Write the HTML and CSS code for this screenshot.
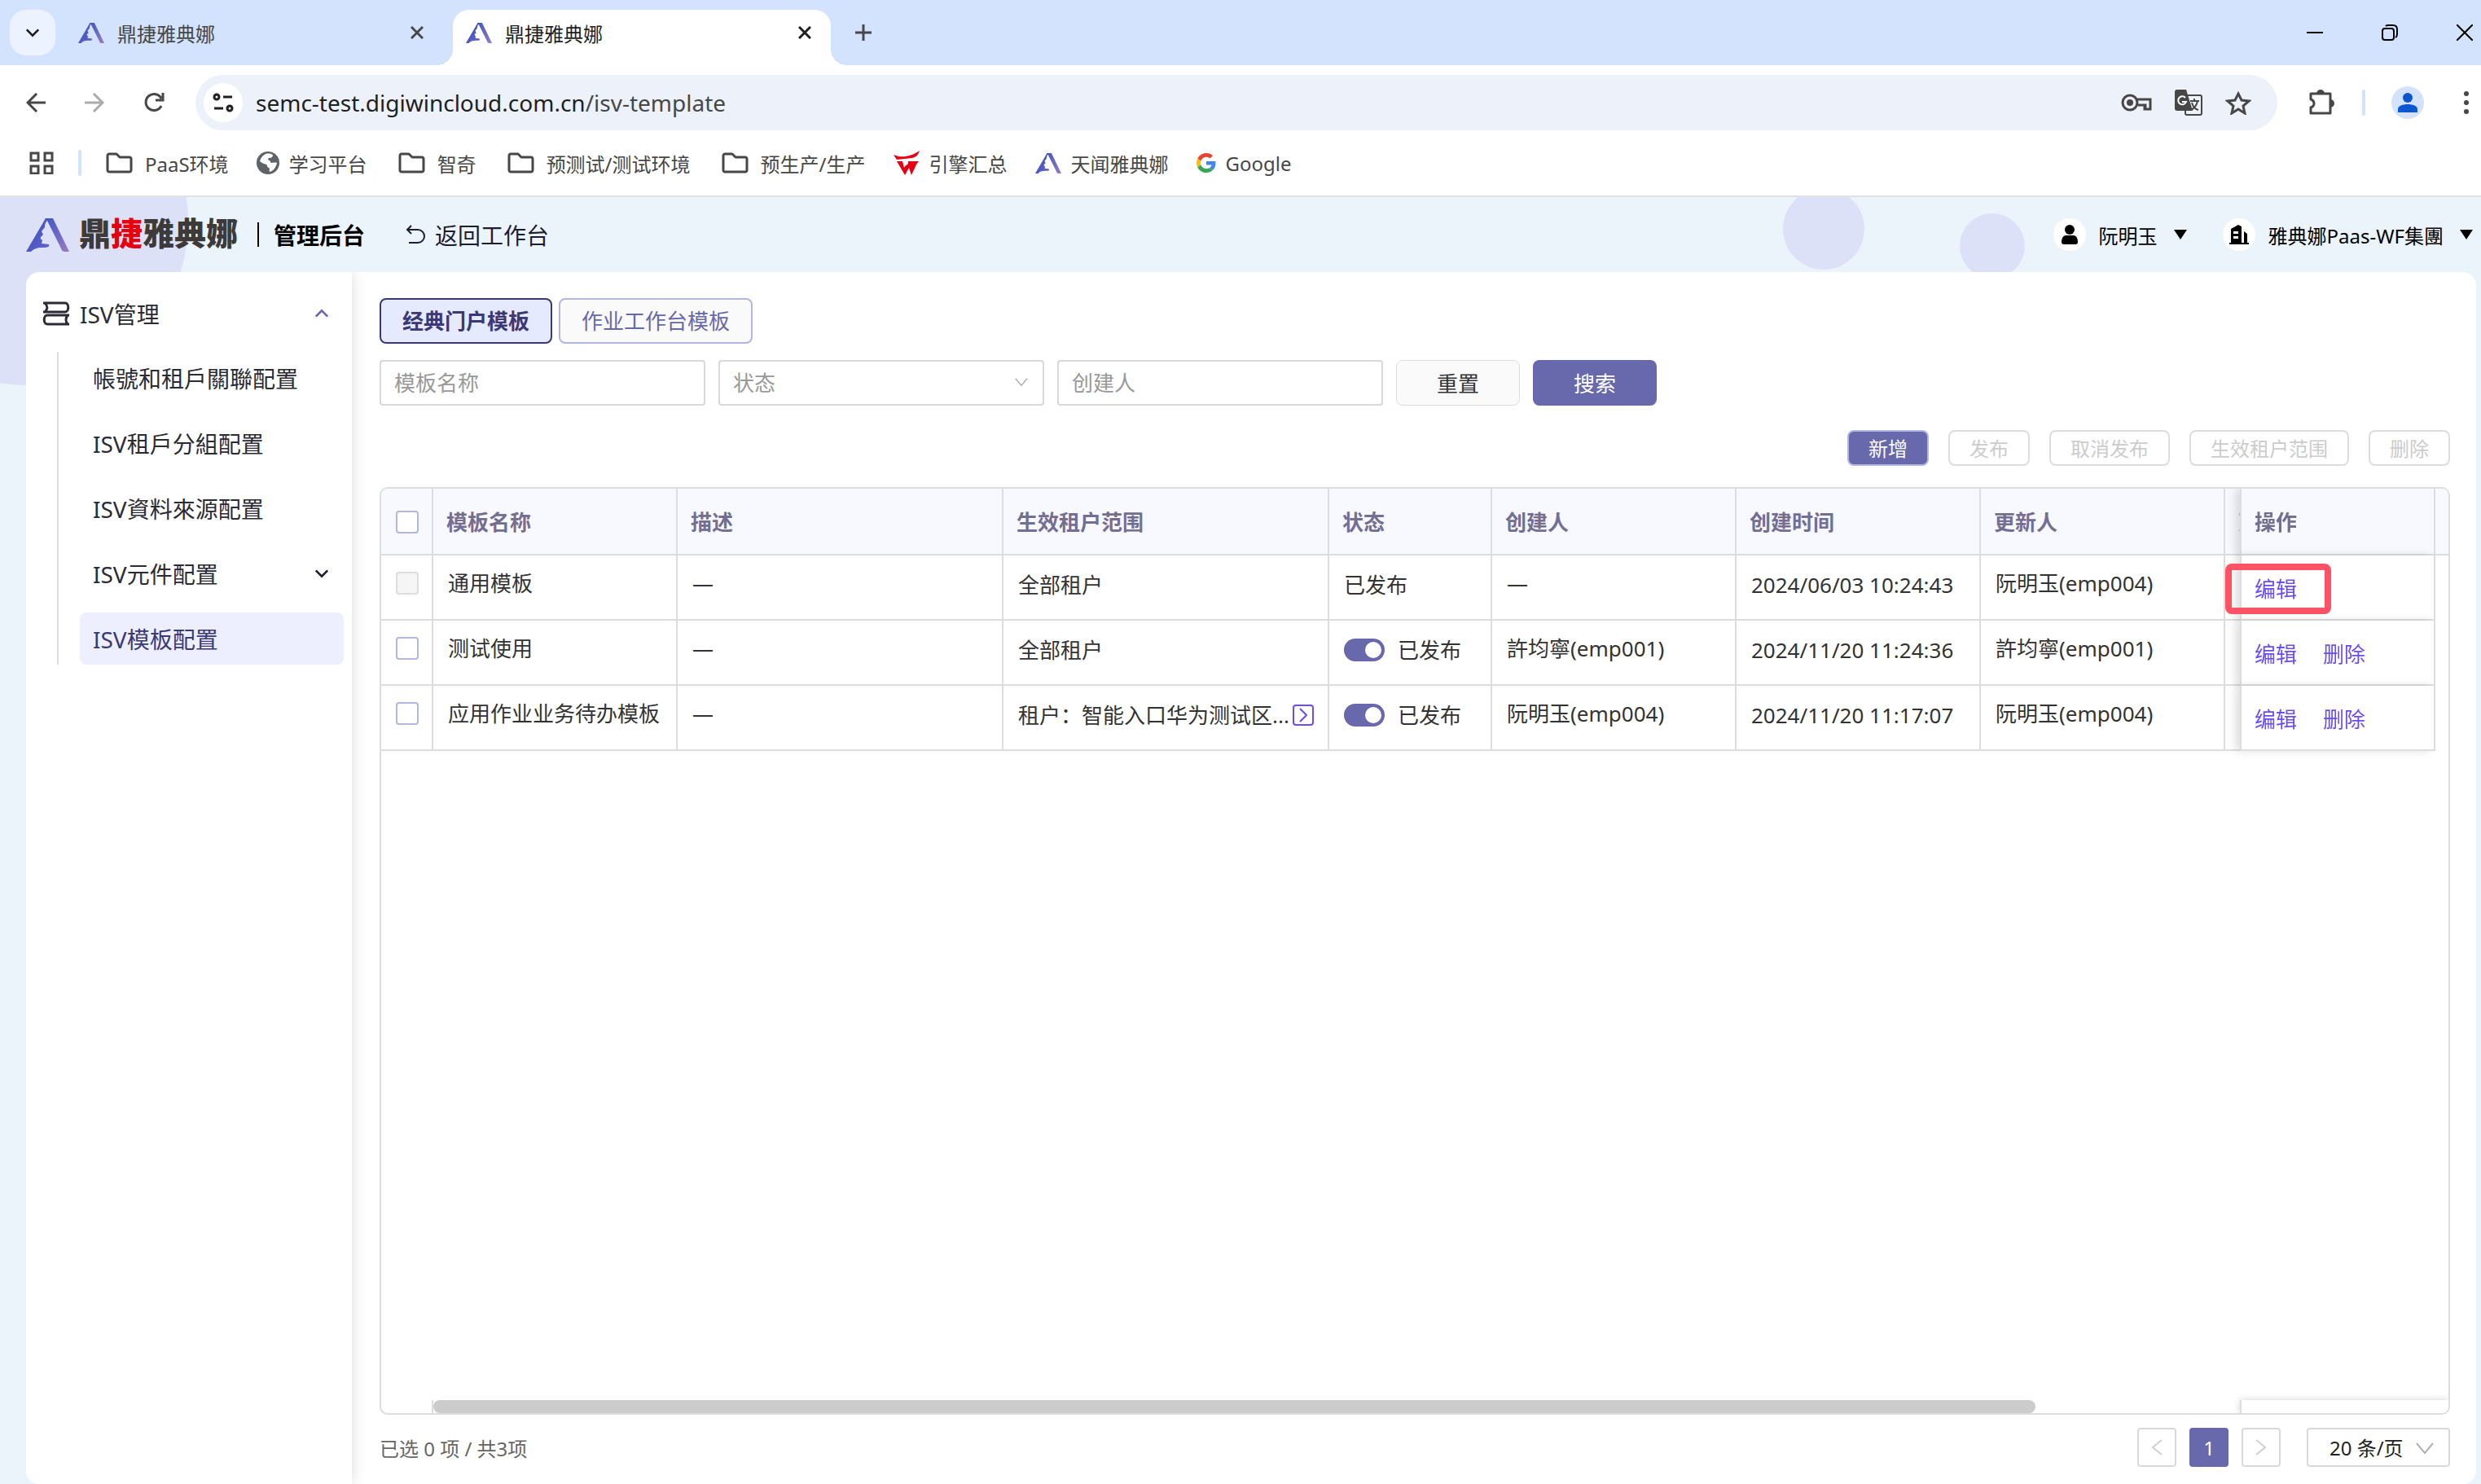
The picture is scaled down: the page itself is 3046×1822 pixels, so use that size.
FILE: index.html
```html
<!DOCTYPE html>
<html lang="zh-CN">
<head>
    <meta charset="UTF-8">
    <meta name="viewport" content="width=device-width, initial-scale=1.0">
    <title>鼎捷雅典娜</title>
    <link rel="stylesheet" href="styles.css">
</head>
<body>
    <!-- 共用图标 -->
    <svg class="defs" width="0" height="0" aria-hidden="true">
        <defs>
            <linearGradient id="logoLeft" x1="0" y1="0" x2="1" y2="1">
                <stop offset="0" stop-color="#2f4fc4"/>
                <stop offset="1" stop-color="#6a63c4"/>
            </linearGradient>
            <linearGradient id="logoRight" x1="0" y1="0" x2="1" y2="1">
                <stop offset="0" stop-color="#3f57c6"/>
                <stop offset="1" stop-color="#9a7cc0"/>
            </linearGradient>
            <symbol id="logo" viewBox="0 0 53 41">
                <path fill="url(#logoLeft)" d="M0 41 24 0h5c-5 4-6 7-6 11l-4 5 2 4-3 3c-1 2 1 3 2 4l-1 4 9 1c1 3-1 4-8 4-7 0-11 2-14 5z"/>
                <path fill="url(#logoRight)" d="M23 0h10l20 41h-5c-3 0-4-1-5-4L26 3z"/>
            </symbol>
            <symbol id="folder" viewBox="0 0 40 32">
                <path fill="none" stroke="#474747" stroke-width="3" stroke-linejoin="round" d="M6 7c0-1 1-2 2-2h9l4 4h12c1 0 2 1 2 2v14c0 1-1 2-2 2H8c-1 0-2-1-2-2z"/>
            </symbol>
            <symbol id="cross" viewBox="0 0 16 16">
                <path fill="none" stroke="currentColor" stroke-width="3" d="M1 1l14 14M15 1L1 15"/>
            </symbol>
            <symbol id="chevron" viewBox="0 0 20 12">
                <path fill="none" stroke="currentColor" stroke-width="3" d="M2 2l8 8 8-8"/>
            </symbol>
            <symbol id="chevron-thin" viewBox="0 0 22 14">
                <path fill="none" stroke="currentColor" stroke-width="2" d="M1 1l10 12L21 1"/>
            </symbol>
        </defs>
    </svg>

    <div class="browser">
        <div class="tab-strip">
            <button class="tab-search" aria-label="搜索标签页"><svg width="18" height="12"><use href="#chevron"/></svg></button>
            <div class="tab">
                <svg width="32" height="25"><use href="#logo"/></svg>
                <span class="tab-title">鼎捷雅典娜</span>
                <button class="tab-close" aria-label="关闭"><svg width="16" height="16"><use href="#cross"/></svg></button>
            </div>
            <div class="tab active">
                <svg width="32" height="25"><use href="#logo"/></svg>
                <span class="tab-title">鼎捷雅典娜</span>
                <button class="tab-close" aria-label="关闭"><svg width="16" height="16"><use href="#cross"/></svg></button>
            </div>
            <button class="tab-new" aria-label="新标签页"><svg width="20" height="20"><path d="M10 0v20M0 10h20" stroke="#474747" stroke-width="3"/></svg></button>
            <div class="window-buttons">
                <button aria-label="最小化"><svg width="20" height="20"><path d="M0 10h20" stroke="#000" stroke-width="2"/></svg></button>
                <button aria-label="还原"><svg width="20" height="20" fill="none" stroke="#000" stroke-width="2"><rect x="1" y="5" width="14" height="14" rx="3"/><path d="M5 2c1-1 2-1 3-1h6c3 0 5 2 5 5v6c0 2 0 3-2 4"/></svg></button>
                <button aria-label="关闭"><svg width="20" height="20"><path d="M0 0l20 20M20 0L0 20" stroke="#000" stroke-width="2"/></svg></button>
            </div>
        </div>

        <div class="toolbar">
            <div class="nav-buttons">
                <button aria-label="后退"><svg width="24" height="24" fill="none" stroke="#474747" stroke-width="3"><path d="M24 12H2M13 1L2 12l11 11"/></svg></button>
                <button aria-label="前进"><svg width="24" height="24" fill="none" stroke="#ababab" stroke-width="3"><path d="M0 12h22M11 1l11 11-11 11"/></svg></button>
                <button aria-label="刷新"><svg width="26" height="26" fill="none" stroke="#474747" stroke-width="3"><path d="M22 17A10 10 0 1 1 22 8M24 1v9h-9"/></svg></button>
            </div>
            <div class="omnibox">
                <button class="site-info" aria-label="网站信息"><svg width="26" height="24" fill="none" stroke="#1f1f1f" stroke-width="3"><circle cx="5" cy="5" r="3"/><path d="M13 5h11M2 19h11"/><circle cx="21" cy="19" r="3"/></svg></button>
                <div class="url">semc-test.digiwincloud.com.cn<span>/isv-template</span></div>
                <button aria-label="密码"><svg width="38" height="24" fill="none" stroke="#474747" stroke-width="3"><circle cx="11" cy="12" r="9"/><circle cx="11" cy="12" r="4" fill="#474747" stroke="none"/><path d="M19 8h17v12h-7v-5M30 20v-5h-9"/></svg></button>
                <button aria-label="翻译"><svg width="34" height="34"><rect x="13" y="8" width="20" height="24" rx="2" fill="none" stroke="#474747" stroke-width="2"/><path d="M3 1h11l8 26H3c-2 0-3-1-3-3V4c0-2 1-3 3-3z" fill="#474747"/><path d="M13 11a5 5 0 1 0 1 5H9" fill="none" stroke="#fff" stroke-width="2"/><path d="M19 15h11M24 12v3M28 15c-1 5-4 9-8 11M21 17c1 4 4 8 8 9" fill="none" stroke="#474747" stroke-width="2"/></svg></button>
                <button aria-label="收藏"><svg width="32" height="30" fill="none" stroke="#474747" stroke-width="3"><path d="M16 4l4 8 9 1-7 6 2 9-8-5-8 5 2-9-7-6 9-1z"/></svg></button>
            </div>
            <button class="extensions" aria-label="扩展程序"><svg width="34" height="34"><path d="M3 6h24v24H3v-7c3-1 4-2 4-5s-1-4-4-5z" fill="none" stroke="#474747" stroke-width="3" stroke-linejoin="round"/><path d="M10 6a5 5 0 0 1 10 0zM27 13a5 5 0 0 1 0 10z" fill="#474747"/></svg></button>
            <span class="bar-divider"></span>
            <button class="profile" aria-label="个人资料"><svg width="24" height="24" fill="#0b57d0"><circle cx="12" cy="6" r="6"/><path d="M0 24v-4c0-4 6-6 12-6s12 2 12 6v4z"/></svg></button>
            <button class="more" aria-label="更多"><svg width="6" height="28" fill="#474747"><circle cx="3" cy="3" r="3"/><circle cx="3" cy="14" r="3"/><circle cx="3" cy="25" r="3"/></svg></button>
        </div>

        <div class="bookmarks">
            <button aria-label="应用"><svg width="30" height="28" fill="none" stroke="#474747" stroke-width="3"><path d="M2 2h9v9H2zM19 2h9v9h-9zM2 18h9v9H2zM19 18h9v9h-9z"/></svg></button>
            <span class="bar-divider"></span>
            <a href="#"><svg width="40" height="32"><use href="#folder"/></svg>PaaS环境</a>
            <a href="#"><svg width="28" height="28"><circle cx="14" cy="14" r="14" fill="#5f6368"/><path d="M11 3c4-1 7 0 9 1 0 3-2 4-5 4-1 0-1 2 0 3 3 0 1 2 3 3 2 0 5-1 7 0-1 6-5 10-9 11-1-3 1-4-1-5-3-1-1-3-3-4-3-1-6-2-8-4 1-4 3-7 7-9z" fill="#fff"/></svg>学习平台</a>
            <a href="#"><svg width="40" height="32"><use href="#folder"/></svg>智奇</a>
            <a href="#"><svg width="40" height="32"><use href="#folder"/></svg>预测试/测试环境</a>
            <a href="#"><svg width="40" height="32"><use href="#folder"/></svg>预生产/生产</a>
            <a href="#"><svg width="32" height="30" fill="#e60012"><path d="M0 5c10 4 20 3 32-5-2 6-5 8-9 9L4 11zM4 13h7l2 8 4-8h14l-3 4-6 13-3-9-5 9z"/><path d="M12 13h6v3l-5 4z" fill="#fff"/></svg>引擎汇总</a>
            <a href="#"><svg width="32" height="25"><use href="#logo"/></svg>天闻雅典娜</a>
            <a href="#"><svg width="24" height="24" viewBox="0 0 48 48"><path fill="#ea4335" d="M24 9.500c3.540 0 6.710 1.220 9.210 3.600l6.850-6.850C35.900 2.380 30.470 0 24 0 14.620 0 6.510 5.380 2.560 13.220l7.980 6.190C12.430 13.720 17.740 9.500 24 9.500z"/><path fill="#4285f4" d="M46.980 24.550c0-1.570-.15-3.090-.38-4.550H24v9.020h12.940c-.58 2.960-2.260 5.480-4.780 7.180l7.730 6c4.510-4.180 7.090-10.360 7.090-17.650z"/><path fill="#fbbc05" d="M10.530 28.590A14.500 14.500 0 0 1 9.770 24c0-1.600.27-3.140.76-4.590l-7.980-6.190A24 24 0 0 0 0 24c0 3.880.92 7.540 2.560 10.780z"/><path fill="#34a853" d="M24 48c6.480 0 11.930-2.130 15.890-5.810l-7.730-6c-2.150 1.450-4.920 2.300-8.160 2.300-6.260 0-11.570-4.220-13.470-9.910l-7.980 6.190C6.510 42.620 14.620 48 24 48z"/></svg>Google</a>
        </div>
    </div>

    <div class="app">
        <span class="bubble bubble-large"></span>
        <span class="bubble bubble-medium"></span>
        <span class="bubble bubble-small"></span>

        <header class="app-header">
            <svg width="53" height="41"><use href="#logo"/></svg>
            <div class="brand">鼎<em>捷</em>雅典娜</div>
            <span class="brand-divider"></span>
            <h1>管理后台</h1>
            <a class="back-link" href="#"><svg width="24" height="24" fill="none" stroke="#1d1c33" stroke-width="2"><path d="M7 1L2 6l5 5M2 6h13a8 8 0 0 1 0 16H4"/></svg>返回工作台</a>
            <div class="account">
                <button><span class="round-icon"><svg width="20" height="24"><circle cx="10" cy="6" r="6"/><path d="M5 13h10c3 0 5 4 5 8 0 2-1 3-3 3H3c-2 0-3-1-3-3 0-4 2-8 5-8z"/></svg></span>阮明玉<svg class="caret" width="16" height="12"><path d="M0 0h16L8 12z"/></svg></button>
                <button><span class="round-icon"><svg width="24" height="24"><path fill-rule="evenodd" d="M0 22h2V5l9-5 4 2v20h3V8l4 3v11h2v2H0zM5 8h6v3H5zM5 14h6v3H5z"/></svg></span>雅典娜Paas-WF集團<svg class="caret" width="16" height="12"><path d="M0 0h16L8 12z"/></svg></button>
            </div>
        </header>

        <div class="panel">
            <nav class="sidebar">
                <button class="menu-title">
                    <svg width="34" height="30" fill="none" stroke="#2b2b36" stroke-width="3"><path d="M1 2h27c5 0 5 11 0 11H1M3 2c4 4 4 7 0 11M33 17H6c-5 0-5 11 0 11h27M31 17c-3 4-3 7 0 11"/></svg>
                    <span>ISV管理</span>
                    <svg class="menu-arrow up" width="18" height="12"><use href="#chevron"/></svg>
                </button>
                <ul class="submenu">
                    <li><a href="#">帳號和租戶關聯配置</a></li>
                    <li><a href="#">ISV租戶分組配置</a></li>
                    <li><a href="#">ISV資料來源配置</a></li>
                    <li><a href="#">ISV元件配置<svg class="menu-arrow" width="18" height="12"><use href="#chevron"/></svg></a></li>
                    <li><a class="active" href="#">ISV模板配置</a></li>
                </ul>
            </nav>

            <main class="content">
                <div class="type-tabs">
                    <button class="type-tab active">经典门户模板</button>
                    <button class="type-tab">作业工作台模板</button>
                </div>

                <form class="filters">
                    <input type="text" placeholder="模板名称" aria-label="模板名称">
                    <div class="select-box">
                        <select aria-label="状态"><option>状态</option></select>
                        <svg width="16" height="10"><use href="#chevron-thin"/></svg>
                    </div>
                    <input type="text" placeholder="创建人" aria-label="创建人">
                    <button type="button" class="btn-reset">重置</button>
                    <button type="button" class="btn-search">搜索</button>
                </form>

                <div class="actions">
                    <button class="btn-add">新增</button>
                    <button disabled>发布</button>
                    <button disabled>取消发布</button>
                    <button disabled>生效租户范围</button>
                    <button disabled>删除</button>
                </div>

                <div class="grid">
                    <div class="grid-view">
                        <table>
                            <colgroup>
                                <col class="w-check"><col class="w-300"><col class="w-400"><col class="w-400"><col class="w-200">
                                <col class="w-300"><col class="w-300"><col class="w-300"><col class="w-300"><col class="w-240"><col class="w-gutter">
                            </colgroup>
                            <thead>
                                <tr>
                                    <th class="check"><input type="checkbox" aria-label="全选"></th>
                                    <th>模板名称</th>
                                    <th>描述</th>
                                    <th>生效租户范围</th>
                                    <th>状态</th>
                                    <th>创建人</th>
                                    <th>创建时间</th>
                                    <th>更新人</th>
                                    <th>更新时间</th>
                                    <th class="operate">操作</th>
                                    <th class="gutter"></th>
                                </tr>
                            </thead>
                            <tbody>
                                <tr>
                                    <td class="check"><input type="checkbox" aria-label="通用模板" disabled></td>
                                    <td>通用模板</td>
                                    <td>—</td>
                                    <td class="custom">全部租户</td>
                                    <td class="custom">已发布</td>
                                    <td>—</td>
                                    <td class="custom">2024/06/03 10:24:43</td>
                                    <td>阮明玉(emp004)</td>
                                    <td></td>
                                    <td class="operate"><a href="#">编辑</a><span class="mark"></span></td>
                                    <td class="gutter"></td>
                                </tr>
                                <tr>
                                    <td class="check"><input type="checkbox" aria-label="测试使用"></td>
                                    <td>测试使用</td>
                                    <td>—</td>
                                    <td class="custom">全部租户</td>
                                    <td class="custom"><label class="status"><input type="checkbox" class="switch" checked>已发布</label></td>
                                    <td>許均寧(emp001)</td>
                                    <td class="custom">2024/11/20 11:24:36</td>
                                    <td>許均寧(emp001)</td>
                                    <td></td>
                                    <td class="operate"><a href="#">编辑</a><a href="#">删除</a></td>
                                    <td class="gutter"></td>
                                </tr>
                                <tr>
                                    <td class="check"><input type="checkbox" aria-label="应用作业业务待办模板"></td>
                                    <td>应用作业业务待办模板</td>
                                    <td>—</td>
                                    <td class="custom"><div class="scope"><span>租户：智能入口华为测试区...</span><button aria-label="展开"><svg width="10" height="18"><path d="M1 1l8 8-8 8" fill="none" stroke="currentColor" stroke-width="2"/></svg></button></div></td>
                                    <td class="custom"><label class="status"><input type="checkbox" class="switch" checked>已发布</label></td>
                                    <td>阮明玉(emp004)</td>
                                    <td class="custom">2024/11/20 11:17:07</td>
                                    <td>阮明玉(emp004)</td>
                                    <td></td>
                                    <td class="operate"><a href="#">编辑</a><a href="#">删除</a></td>
                                    <td class="gutter"></td>
                                </tr>
                            </tbody>
                        </table>
                    </div>
                    <div class="scroll-row">
                        <div class="scroll-left"></div>
                        <div class="scroll-track"><div class="scroll-thumb"></div></div>
                        <div class="scroll-right"></div>
                    </div>
                </div>

                <footer class="pager">
                    <p>已选 0 项 / 共3项</p>
                    <button aria-label="上一页" disabled><svg width="14" height="20"><path d="M13 1L2 10l11 9" fill="none" stroke="#d0d0d0" stroke-width="2"/></svg></button>
                    <button class="current">1</button>
                    <button aria-label="下一页" disabled><svg width="14" height="20"><path d="M1 1l11 9-11 9" fill="none" stroke="#d0d0d0" stroke-width="2"/></svg></button>
                    <div class="select-box page-size">
                        <select aria-label="每页条数"><option>20 条/页</option></select>
                        <svg width="22" height="14"><use href="#chevron-thin"/></svg>
                    </div>
                </footer>
            </main>
        </div>
    </div>
</body>
</html>
```
FILE: styles.css
```css
* {
    margin: 0;
    padding: 0;
    box-sizing: border-box;
}

body {
    font-family: "Noto Sans", "Noto Sans CJK SC", sans-serif;
    font-size: 26px;
    color: #333;
    display: flex;
    flex-direction: column;
    height: 100vh;
    overflow: hidden;
}

button {
    font: inherit;
    color: inherit;
    background: none;
    border: none;
    display: flex;
    align-items: center;
    justify-content: center;
    white-space: nowrap;
    cursor: pointer;
}

a {
    color: inherit;
    text-decoration: none;
}

svg {
    flex: none;
    display: block;
}

.defs {
    position: absolute;
}

/* 浏览器外框 */
.browser {
    flex: none;
    background: #fff;
    border-bottom: 2px solid #dfe1e5;
    font-size: 24px;
    color: #474747;
}

.tab-strip {
    display: flex;
    align-items: center;
    gap: 12px;
    height: 80px;
    padding: 0 10px 0 12px;
    background: #d3e3fd;
}

.tab-search {
    width: 56px;
    height: 56px;
    border-radius: 20px;
    background: #ecf3fe;
    color: #1f1f1f;
}

.tab {
    position: relative;
    display: flex;
    align-items: center;
    gap: 16px;
    width: 464px;
    height: 68px;
    padding: 0 24px 0 16px;
}

.tab-title {
    flex: 1;
}

.tab.active {
    align-self: flex-end;
    padding-bottom: 12px;
    background: #fff;
    border-radius: 20px 20px 0 0;
    color: #1f1f1f;
}

.tab.active::before,
.tab.active::after {
    content: "";
    position: absolute;
    bottom: 0;
    width: 20px;
    height: 20px;
}

.tab.active::before {
    left: -20px;
    background: radial-gradient(circle at 0 0, transparent 20px, #fff 20px);
}

.tab.active::after {
    right: -20px;
    background: radial-gradient(circle at 100% 0, transparent 20px, #fff 20px);
}

.tab-new {
    margin-left: 18px;
}

.window-buttons {
    display: flex;
    gap: 72px;
    margin-left: auto;
}

.toolbar {
    display: flex;
    align-items: center;
    height: 92px;
    padding: 0 15px 0 32px;
}

.nav-buttons {
    display: flex;
    gap: 48px;
    width: 208px;
}

.omnibox {
    flex: 1;
    display: flex;
    align-items: center;
    gap: 28px;
    height: 68px;
    padding: 0 32px 0 10px;
    border-radius: 34px;
    background: #edf1fa;
    margin-right: 38px;
}

.site-info {
    width: 48px;
    height: 48px;
    border-radius: 24px;
    background: #fff;
}

.url {
    flex: 1;
    margin-left: -12px;
    font-size: 28px;
    color: #1f1f1f;
}

.url span {
    color: #474747;
}

.bar-divider {
    width: 4px;
    height: 32px;
    border-radius: 2px;
    background: #d3e3fd;
}

.toolbar .bar-divider {
    margin: 0 32px;
}

.profile {
    width: 40px;
    height: 40px;
    border-radius: 20px;
    background: #d3e3fd;
    margin-right: 49px;
}

.bookmarks {
    display: flex;
    align-items: center;
    gap: 34px;
    height: 56px;
    padding-left: 36px;
    margin-bottom: 12px;
}

.bookmarks a {
    display: flex;
    align-items: center;
    gap: 12px;
    white-space: nowrap;
}

.bookmarks .bar-divider {
    margin: 0 -8px 0 -4px;
}

/* 页面头部 */
.app {
    position: relative;
    flex: 1;
    min-height: 0;
    display: flex;
    flex-direction: column;
    overflow: hidden;
    background: #ebf3fb;
}

.bubble {
    position: absolute;
    border-radius: 50%;
    background: #dde1f8;
}

.bubble-large {
    left: -169px;
    top: -169px;
    width: 400px;
    height: 400px;
}

.bubble-medium {
    right: 757px;
    top: -11px;
    width: 100px;
    height: 100px;
}

.bubble-small {
    right: 560px;
    top: 20px;
    width: 80px;
    height: 80px;
}

.app-header {
    position: relative;
    flex: none;
    display: flex;
    align-items: center;
    height: 92px;
    padding: 0 10px 0 32px;
    color: #000;
}

.brand {
    margin-left: 12px;
    font-size: 39px;
    font-weight: 900;
    line-height: 48px;
    padding-bottom: 4px;
    color: #3e3a39;
}

.brand em {
    font-style: normal;
    color: #e60012;
}

.brand-divider {
    width: 2px;
    height: 30px;
    margin: 0 18px 0 24px;
    background: #000;
}

.app-header h1 {
    font-size: 28px;
    font-weight: 700;
}

.back-link {
    display: flex;
    align-items: center;
    gap: 12px;
    margin-left: 50px;
    font-size: 28px;
    color: #1d1c33;
}

.account {
    display: flex;
    gap: 44px;
    margin-left: auto;
    font-size: 24px;
}

.round-icon {
    display: flex;
    align-items: center;
    justify-content: center;
    width: 40px;
    height: 40px;
    margin-right: 16px;
    border-radius: 20px;
    background: #fff;
}

.caret {
    margin-left: 20px;
}

.panel {
    position: relative;
    flex: 1;
    min-height: 0;
    display: flex;
    margin: 0 6px 0 32px;
    border-radius: 16px;
    background: #fff;
    overflow: hidden;
}

/* 侧边菜单 */
.sidebar {
    flex: none;
    width: 400px;
    padding: 16px 10px 0 20px;
    box-shadow: 0 0 16px rgba(0, 0, 0, 0.15);
    font-size: 28px;
    color: #2b2b36;
}

.menu-title {
    width: 100%;
    height: 70px;
    gap: 12px;
    padding-right: 18px;
}

.menu-arrow {
    margin-left: auto;
    color: #1d1c33;
}

.menu-arrow.up {
    transform: rotate(180deg);
    color: #6868ad;
}

.submenu {
    list-style: none;
    display: flex;
    flex-direction: column;
    gap: 16px;
    margin: 12px 0 0 18px;
    padding-left: 26px;
    border-left: 2px solid #d8dcec;
}

.submenu a {
    display: flex;
    align-items: center;
    height: 64px;
    padding: 0 18px 0 16px;
    border-radius: 8px;
}

.submenu a.active {
    background: #eeeffe;
    color: #3a3877;
}

/* 内容区 */
.content {
    flex: 1;
    min-width: 0;
    display: flex;
    flex-direction: column;
    padding: 32px 32px 21px 34px;
}

.type-tabs {
    display: flex;
    gap: 8px;
}

.type-tab {
    height: 56px;
    padding: 0 26px 2px;
    border: 2px solid #b1b7e0;
    border-radius: 8px;
    background: #fafafa;
    color: #6868ad;
}

.type-tab.active {
    border-color: #3a3877;
    background: #e6eafe;
    color: #3a3877;
    font-weight: 700;
}

.filters {
    display: flex;
    gap: 16px;
    margin-top: 20px;
}

.filters input,
.select-box select {
    width: 400px;
    height: 56px;
    padding: 0 16px;
    border: 2px solid #d9d9d9;
    border-radius: 4px;
    background: #fff;
    font: inherit;
    color: #999;
    outline: none;
}

.filters input::placeholder {
    color: #999;
}

.select-box {
    position: relative;
}

.select-box select {
    appearance: none;
}

.select-box svg {
    position: absolute;
    right: 20px;
    top: 50%;
    margin-top: -6px;
    color: #b0b0b0;
    pointer-events: none;
}

.filters button {
    width: 152px;
    height: 56px;
    border-radius: 8px;
}

.btn-reset {
    border: 1px solid #ddd;
    background: #fafafa;
}

.btn-search {
    background: #6868ad;
    color: #fff;
}

.actions {
    display: flex;
    justify-content: flex-end;
    gap: 24px;
    margin: 30px 0 26px;
    font-size: 24px;
}

.actions button {
    height: 44px;
    padding: 0 24px 2px;
    border: 2px solid #ddd;
    border-radius: 8px;
    color: #ccc;
}

.actions .btn-add {
    border-color: #b1b7e0;
    background: #6868ad;
    color: #fff;
}

/* 表格 */
.grid {
    flex: 1;
    min-height: 0;
    display: flex;
    flex-direction: column;
    border: 2px solid #ddd;
    border-radius: 10px;
    overflow: hidden;
}

.grid-view {
    flex: 1;
    min-height: 0;
    overflow: hidden;
}

table {
    width: 100%;
    min-width: 2820px;
    table-layout: fixed;
    border-collapse: separate;
    border-spacing: 0;
}

.w-check { width: 64px; }
.w-200 { width: 200px; }
.w-240 { width: 240px; }
.w-300 { width: 300px; }
.w-400 { width: 400px; }
.w-gutter { width: 16px; }

th,
td {
    border-right: 2px solid #ddd;
    border-bottom: 2px solid #ddd;
    text-align: left;
    white-space: nowrap;
    overflow: hidden;
}

th {
    height: 82px;
    padding: 0 16px;
    background: #f8f9fe;
    color: #736e92;
    font-weight: 700;
}

td {
    height: 80px;
    padding: 14px 8px 0 18px;
    line-height: 40px;
    vertical-align: top;
    background: #fff;
}

td.custom {
    padding-top: 16px;
}

.check,
td.check {
    padding-left: 18px;
    padding-right: 0;
}

.check input {
    display: block;
    appearance: none;
    width: 28px;
    height: 28px;
    border: 2px solid #b1b7e0;
    border-radius: 4px;
    background: #fff;
}

th.check {
    padding-top: 2px;
}

td.check {
    padding-top: 20px;
}

.check input:disabled {
    border-color: #ddd;
    background: #f5f5f5;
}

.operate {
    position: sticky;
    right: 16px;
    z-index: 1;
    overflow: visible;
    border-left: 2px solid #ddd;
    padding-left: 16px;
    box-shadow: -6px 0 10px rgba(0, 0, 0, 0.12);
}

td.operate {
    padding: 21px 0 0 16px;
    color: #6a4cff;
}

.operate a + a {
    margin-left: 32px;
}

.gutter {
    position: sticky;
    right: 0;
    z-index: 1;
    padding: 0;
    border-right: none;
}

td.gutter {
    border-bottom: none;
    padding: 0;
    z-index: 2;
}

/* 操作列的红框标注 */
.mark {
    position: absolute;
    left: -20px;
    top: 10px;
    width: 130px;
    height: 62px;
    border: 8px solid #ff5265;
    border-radius: 8px;
}

.status {
    display: flex;
    align-items: center;
    gap: 16px;
}

.switch {
    flex: none;
    appearance: none;
    width: 50px;
    height: 28px;
    padding: 4px;
    border-radius: 14px;
    background: #6868ad;
}

.switch::before {
    content: "";
    display: block;
    width: 20px;
    height: 20px;
    margin-left: auto;
    border-radius: 10px;
    background: #fff;
}

.scope {
    display: flex;
    align-items: center;
    gap: 4px;
}

.scope button {
    flex: none;
    width: 26px;
    height: 26px;
    border: 2px solid #6a4cff;
    border-radius: 4px;
    color: #6a4cff;
}

/* 横向滚动条 */
.scroll-row {
    display: flex;
    height: 16px;
}

.scroll-left {
    width: 64px;
    border-right: 2px solid #ddd;
}

.scroll-track {
    flex: 1;
}

.scroll-thumb {
    width: 88.7%;
    height: 16px;
    border-radius: 8px;
    background: #ccc;
}

.scroll-right {
    width: 256px;
    border-left: 2px solid #ddd;
    background: #fff;
    box-shadow: 0 0 10px rgba(0, 0, 0, 0.18);
}

/* 分页 */
.pager {
    display: flex;
    align-items: center;
    gap: 16px;
    margin-top: 16px;
    font-size: 24px;
}

.pager p {
    flex: 1;
    color: #666;
}

.pager button {
    width: 48px;
    height: 48px;
    border: 2px solid #d9d9d9;
    border-radius: 4px;
}

.pager .current {
    border-color: #6868ad;
    background: #6868ad;
    color: #fff;
}

.page-size {
    margin-left: 16px;
}

.page-size select {
    width: 176px;
    height: 48px;
    padding: 0 26px;
    color: #222;
}
```
